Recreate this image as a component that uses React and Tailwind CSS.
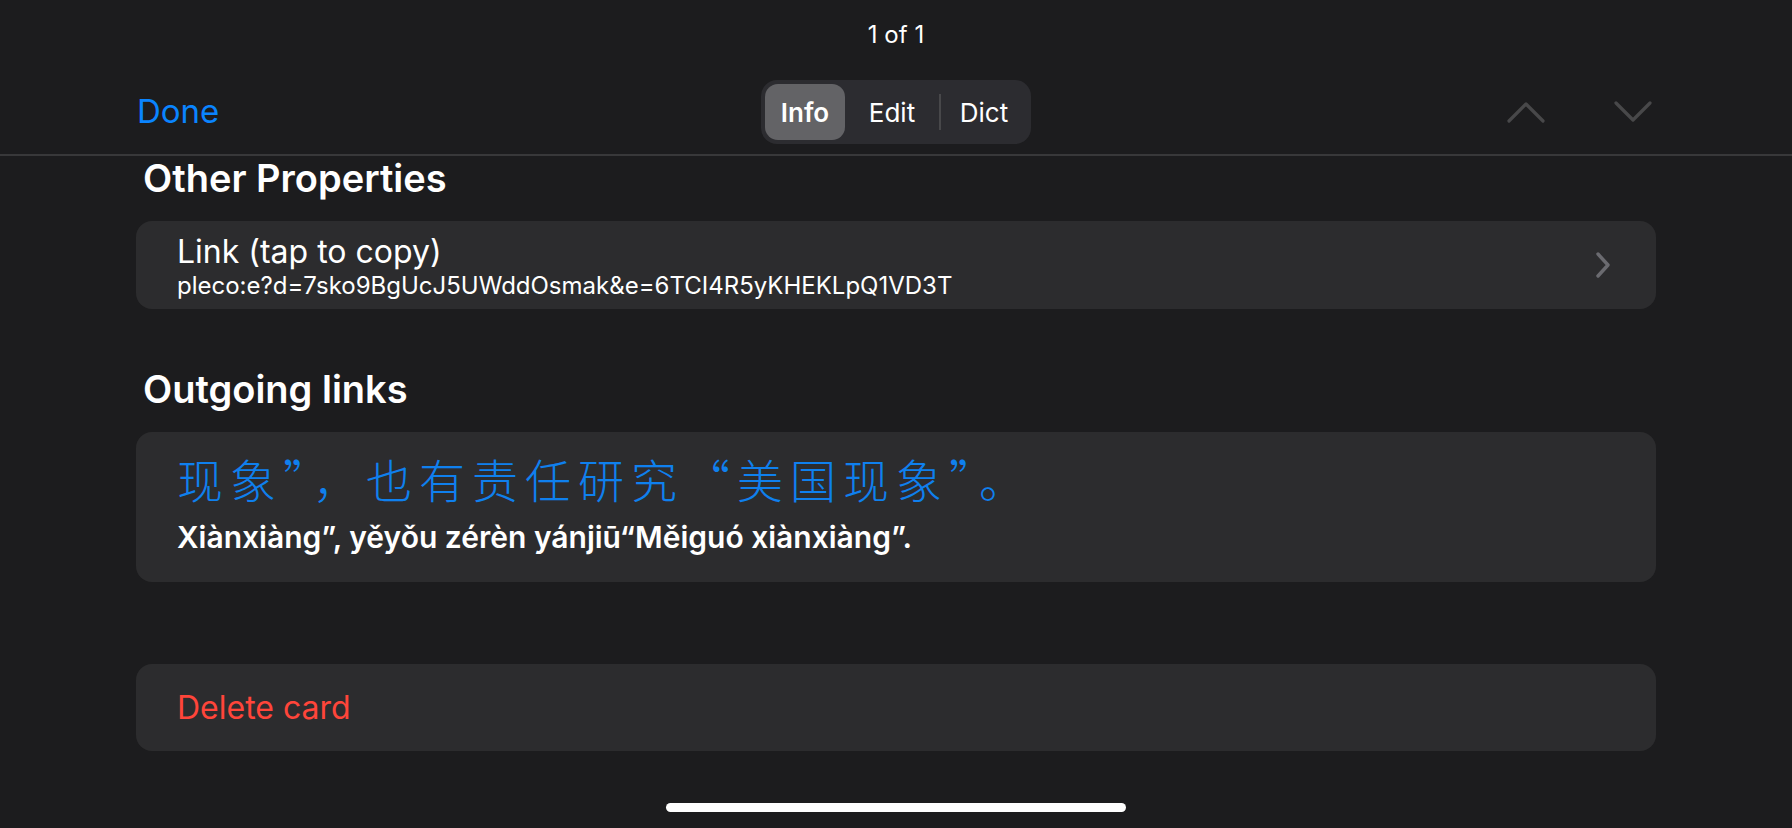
const font = { fontFamily: 'Inter, "Noto Sans", sans-serif' }

function Chevron({ up }) {
  return (
    <svg width="38" height="22" viewBox="0 0 38 22" fill="none" className="text-[#48484a]">
      <path
        d={up ? 'M2 20 L19 3 L36 20' : 'M2 2 L19 19 L36 2'}
        stroke="currentColor"
        strokeWidth="3.2"
        strokeLinecap="round"
        strokeLinejoin="round"
      />
    </svg>
  )
}

function Segmented() {
  return (
    <div className="flex h-[64px] items-center rounded-[16px] bg-[#2c2c30] p-[4px]">
      <div className="flex h-[56px] w-[80px] items-center justify-center rounded-[13px] bg-[#636366] text-[26px] font-semibold text-white">
        Info
      </div>
      <div className="flex h-[56px] w-[94px] items-center justify-center text-[26px] text-white">
        Edit
      </div>
      <div className="h-[36px] w-[2px] bg-[#48484a]" />
      <div className="flex h-[56px] w-[86px] items-center justify-center text-[26px] text-white">
        Dict
      </div>
    </div>
  )
}

export default function App() {
  return (
    <div className="relative h-[828px] w-full overflow-hidden bg-[#1c1c1e] text-white" style={font}>
      <header className="border-b-2 border-[#38383a]">
        <div className="flex h-[70px] items-center justify-center text-[24px] text-white">1 of 1</div>
        <div className="grid h-[84px] grid-cols-[1fr_auto_1fr] items-center">
          <div className="pl-[137px] text-[33px] text-[#0a84ff]">Done</div>
          <Segmented />
          <div className="flex items-center justify-end gap-[69px] pr-[140px]">
            <Chevron up />
            <Chevron />
          </div>
        </div>
      </header>

      <main className="px-[136px]">
        <h2 className="pl-[7px] text-[38px] font-semibold leading-[44px]">Other Properties</h2>
        <div className="mt-[21px] flex h-[88px] items-center justify-between rounded-[16px] bg-[#2c2c2e] pl-[41px] pr-[44px]">
          <div className="flex flex-col pt-[3px]">
            <div className="text-[32px] leading-[38px]">Link (tap to copy)</div>
            <div className="text-[24px] leading-[30px]">pleco:e?d=7sko9BgUcJ5UWddOsmak&amp;e=6TCI4R5yKHEKLpQ1VD3T</div>
          </div>
          <svg width="18" height="28" viewBox="0 0 18 28" fill="none" className="text-[#6b6b70]">
            <path d="M4 3 L14 14 L4 25" stroke="currentColor" strokeWidth="3.4" strokeLinecap="round" strokeLinejoin="round" />
          </svg>
        </div>

        <h2 className="mt-[58px] pl-[7px] text-[38px] font-semibold leading-[44px]">Outgoing links</h2>
        <div className="mt-[21px] flex h-[150px] flex-col rounded-[16px] bg-[#2c2c2e] pl-[41px] pt-[18px]">
          <div
            className="text-[46px] leading-[56px] tracking-[7px] text-[#0f80ee]"
            style={{ fontFamily: '"Noto Sans CJK SC", sans-serif', fontWeight: 300 }}
          >
            现象”，也有责任研究“美国现象”。
          </div>
          <div className="mt-[13px] text-[30px] font-semibold leading-[36px]">
            Xiànxiàng”, yěyǒu zérèn yánjiū“Měiguó xiànxiàng”.
          </div>
        </div>

        <div className="mt-[82px] flex h-[87px] items-center rounded-[16px] bg-[#2c2c2e] pl-[41px] text-[32px] text-[#ff453a]">
          Delete card
        </div>
      </main>

      <div className="absolute bottom-[16px] left-1/2 h-[9px] w-[460px] -translate-x-1/2 rounded-full bg-white" />
    </div>
  )
}
